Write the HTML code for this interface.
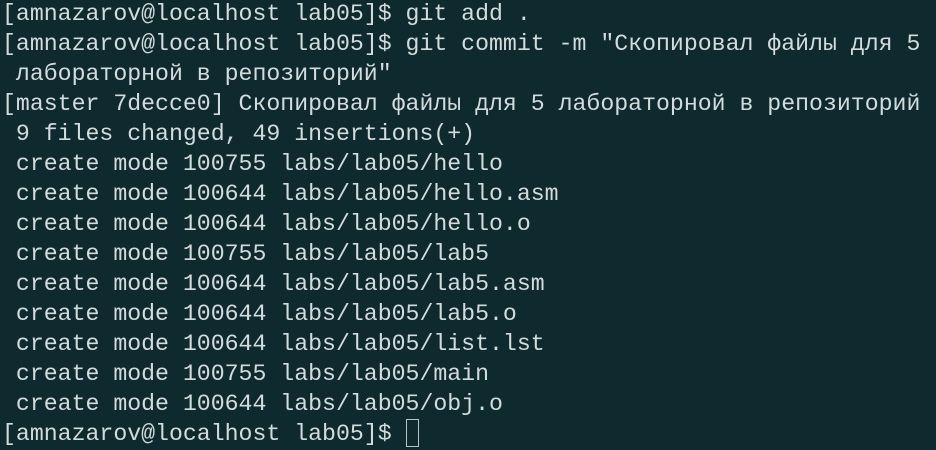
<!DOCTYPE html>
<html><head><meta charset="utf-8"><style>
html,body{margin:0;padding:0;background:#0f2a2f;width:936px;height:450px;overflow:hidden}
pre{margin:0;position:absolute;left:2px;top:-1px;font-family:"Liberation Mono","DejaVu Sans Mono",monospace;font-size:23.2px;line-height:30px;color:#d3dbdb;white-space:pre}
.cur{display:inline-block;width:13px;height:28px;border:1px solid #b8c4c4;vertical-align:-7px;box-sizing:border-box}
</style></head><body><pre>[amnazarov@localhost lab05]$ git add .
[amnazarov@localhost lab05]$ git commit -m "Скопировал файлы для 5
 лабораторной в репозиторий"
[master 7decce0] Скопировал файлы для 5 лабораторной в репозиторий
 9 files changed, 49 insertions(+)
 create mode 100755 labs/lab05/hello
 create mode 100644 labs/lab05/hello.asm
 create mode 100644 labs/lab05/hello.o
 create mode 100755 labs/lab05/lab5
 create mode 100644 labs/lab05/lab5.asm
 create mode 100644 labs/lab05/lab5.o
 create mode 100644 labs/lab05/list.lst
 create mode 100755 labs/lab05/main
 create mode 100644 labs/lab05/obj.o
[amnazarov@localhost lab05]$ <span class="cur"></span></pre></body></html>
